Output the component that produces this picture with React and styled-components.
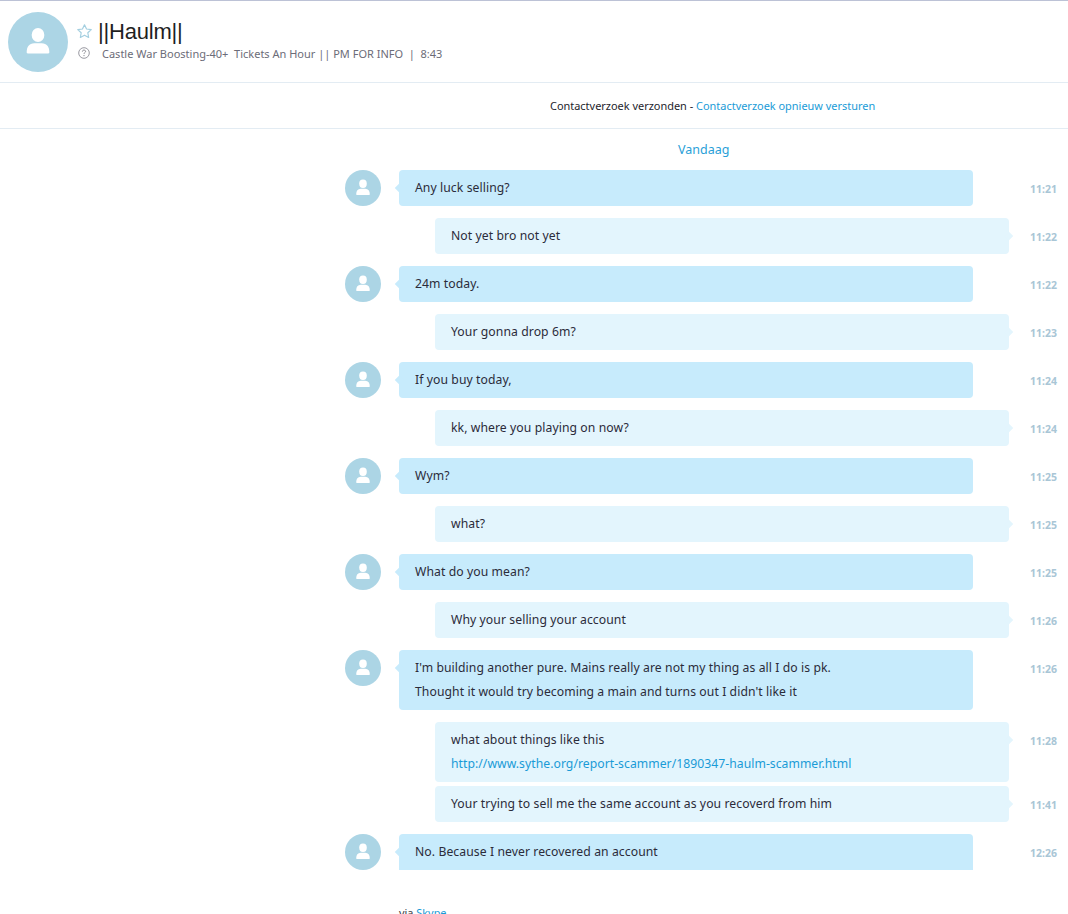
import React from "react";
import styled, { createGlobalStyle } from "styled-components";

const Global = createGlobalStyle`
  html, body { margin: 0; padding: 0; height: 914px; overflow: hidden; background: #fff; }
  body { font-family: "Noto Sans", "Open Sans", sans-serif; color: #2b2b3a; }
  #root { height: 914px; overflow: hidden; }
`;
const Page = styled.div`
  width: 1068px;
  height: 914px;
  overflow: hidden;
  display: flex;
  flex-direction: column;
  background: #fff;
`;
const Header = styled.header`
  flex: none;
  box-sizing: border-box;
  border-top: 1px solid #bcc2d6;
  border-bottom: 1px solid #e3ecf3;
  height: 83px;
  padding: 11px 0 0 8px;
  display: flex;
  gap: 9px;
`;
const HeaderAvatar = styled.div`
  width: 60px;
  height: 60px;
  border-radius: 50%;
  background: #acd5e5;
  display: flex;
  align-items: center;
  justify-content: center;
  flex: none;
`;
const HeaderInfo = styled.div`
  display: flex;
  flex-direction: column;
  padding-top: 7px;
`;
const NameRow = styled.div`
  display: flex;
  align-items: center;
  gap: 6px;
  height: 25px;
`;
const Name = styled.span`
  font: 22px/25px "Liberation Sans", Arial, sans-serif;
  color: #1f1f1f;
  letter-spacing: -0.2px;
`;
const StatusRow = styled.div`
  display: flex;
  align-items: center;
  margin-top: -1px;
  height: 20px;
`;
const Status = styled.span`
  margin-left: 12px;
  font-size: 11px;
  color: #6c6c78;
  white-space: pre;
`;
const Notice = styled.div`
  flex: none;
  height: 46px;
  box-sizing: border-box;
  border-bottom: 1px solid #e3ecf3;
  padding: 0 190px 0 550px;
  display: flex;
  align-items: center;
  white-space: pre;
  font-size: 10.95px;
  color: #24242c;
`;
const Link = styled.a`
  color: #1a9bd7;
  text-decoration: none;
`;
const UrlLink = styled(Link)`
  letter-spacing: 0.04px;
`;
const Conversation = styled.main`
  flex: none;
  padding-left: 345px;
  display: flex;
  flex-direction: column;
`;
const DayLabel = styled.div`
  height: 29px;
  box-sizing: border-box;
  padding: 13px 0 0 333px;
  font-size: 12.5px;
  line-height: 16px;
  color: #2a9fd8;
`;
const Row = styled.div`
  flex: none;
  display: flex;
  align-items: flex-start;
  margin-top: ${(p) => p.$gap ?? 12}px;
  padding-left: ${(p) => (p.$out ? 90 : 0)}px;
`;
const Avatar = styled.div`
  width: 36px;
  height: 36px;
  border-radius: 50%;
  background: #acd5e5;
  margin-right: 18px;
  display: flex;
  align-items: center;
  justify-content: center;
  flex: none;
`;
const Bubble = styled.div`
  position: relative;
  width: 574px;
  box-sizing: border-box;
  padding: 6px 16px;
  min-height: 36px;
  background: ${(p) => (p.$out ? "#e3f5fd" : "#c7ebfc")};
  border-radius: ${(p) => (p.$square ? "4px 4px 0 0" : "4px")};
  font-size: 12.2px;
  letter-spacing: 0.08px;
  line-height: 24px;
  color: #2b2b3a;
  &::after {
    content: "";
    position: absolute;
    top: 15px;
    width: 6px;
    height: 6px;
    transform: rotate(45deg);
    background: inherit;
    ${(p) => (p.$out ? "right: -3px;" : "left: -3px;")}
  }
`;
const Line = styled.div`
  white-space: pre;
`;
const Time = styled.time`
  position: relative;
  margin-left: ${(p) => (p.$out ? 21 : 57)}px;
  padding-top: 12px;
  width: 27px;
  font: bold 10.5px/14px "Noto Sans", sans-serif;
  color: #a9c6d6;
`;
const Via = styled.div`
  margin: 36px 0 0 54px;
  font-size: 10.9px;
  line-height: 14px;
  color: #3a3a44;
  white-space: pre;
`;
const Dash = styled.span`
  color: #1a9bd7;
`;

const Person = ({ size }) => (
  <svg width={size} height={size} viewBox="0 0 36 36" aria-hidden="true">
    <ellipse cx="18" cy="13.8" rx="3.8" ry="4.2" fill="#fff" />
    <path d="M11.2 24.2c0-3.4 1.5-5.5 4.6-5.5h4.4c3.1 0 4.6 2.1 4.6 5.5 0 .5-.3.7-.7.7H11.9c-.4 0-.7-.2-.7-.7z" fill="#fff" />
  </svg>
);
const StarIcon = () => (
  <svg width="15" height="15" viewBox="0.5 0.5 14 14" fill="none" aria-hidden="true">
    <path d="M7.5 1.2l1.9 4 4.4.5-3.2 3 .8 4.4-3.9-2.2-3.9 2.2.8-4.4-3.2-3 4.4-.5z" stroke="#a4cfe0" strokeWidth="1.1" strokeLinejoin="round" />
  </svg>
);
const HelpIcon = () => (
  <svg width="12" height="12" viewBox="0 0 12 12" fill="none" aria-hidden="true" style={{ marginLeft: 1 }}>
    <circle cx="6" cy="6" r="5.3" stroke="#9a9aa2" strokeWidth="1" />
    <path d="M4.4 4.6c0-1 .7-1.5 1.6-1.5s1.6.5 1.6 1.3c0 1.2-1.6 1.2-1.6 2.4" stroke="#8a8a92" strokeWidth="1" />
    <circle cx="6" cy="8.6" r=".65" fill="#8a8a92" />
  </svg>
);

const messages = [
  { time: "11:21", lines: ["Any luck selling?"] },
  { out: true, time: "11:22", lines: ["Not yet bro not yet"] },
  { time: "11:22", lines: ["24m today."] },
  { out: true, time: "11:23", lines: ["Your gonna drop 6m?"] },
  { time: "11:24", lines: ["If you buy today,"] },
  { out: true, time: "11:24", lines: ["kk, where you playing on now?"] },
  { time: "11:25", lines: ["Wym?"] },
  { out: true, time: "11:25", lines: ["what?"] },
  { time: "11:25", lines: ["What do you mean?"] },
  { out: true, time: "11:26", lines: ["Why your selling your account"] },
  { time: "11:26", lines: ["I'm building another pure. Mains really are not my thing as all I do is pk.", "Thought it would try becoming a main and turns out I didn't like it"] },
  { out: true, time: "11:28", lines: ["what about things like this"], link: "http://www.sythe.org/report-scammer/1890347-haulm-scammer.html" },
  { out: true, gap: 4, time: "11:41", lines: ["Your trying to sell me the same account as you recoverd from him"] },
  { time: "12:26", square: true, lines: ["No. Because I never recovered an account"] },
];

export default function App() {
  return (
    <Page>
      <Global />
      <Header>
        <HeaderAvatar><Person size={60} /></HeaderAvatar>
        <HeaderInfo>
          <NameRow>
            <StarIcon />
            <Name>||Haulm||</Name>
          </NameRow>
          <StatusRow>
            <HelpIcon />
            <Status>Castle War Boosting-40+  Tickets An Hour || PM FOR INFO  |  8:43</Status>
          </StatusRow>
        </HeaderInfo>
      </Header>
      <Notice>
        Contactverzoek verzonden - <Link href="#">Contactverzoek opnieuw versturen</Link>
      </Notice>
      <Conversation>
        <DayLabel>Vandaag</DayLabel>
        {messages.map((m, i) => (
          <Row key={i} $out={m.out} $gap={m.gap}>
            {!m.out && <Avatar><Person size={36} /></Avatar>}
            <Bubble $out={m.out} $square={m.square}>
              {m.lines.map((l) => <Line key={l}>{l}</Line>)}
              {m.link && <Line><UrlLink href="#">{m.link}</UrlLink></Line>}
            </Bubble>
            <Time $out={m.out}>{m.time}</Time>
          </Row>
        ))}
        <Via>via <Link href="#">Skype</Link> <Dash>—</Dash></Via>
      </Conversation>
    </Page>
  );
}
